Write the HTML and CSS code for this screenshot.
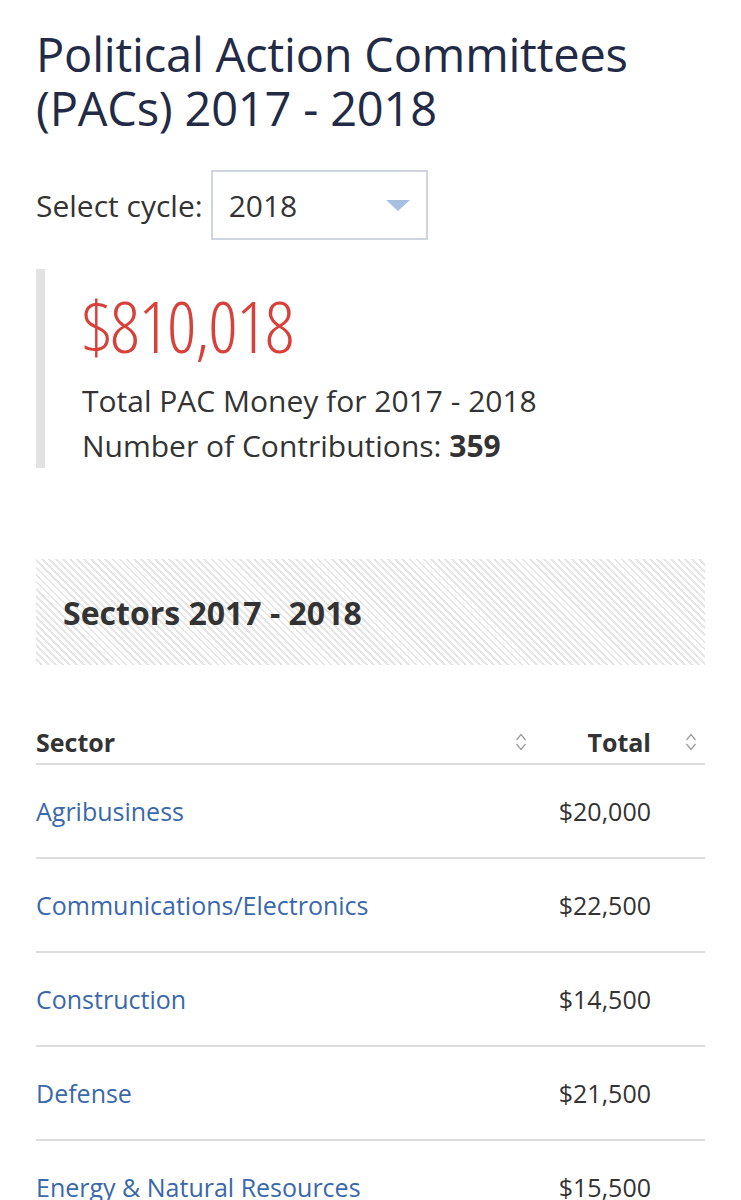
FILE: index.html
```html
<!DOCTYPE html>
<html lang="en">
<head>
<meta charset="utf-8">
<title>Political Action Committees (PACs) 2017 - 2018</title>
<link rel="stylesheet" href="styles.css">
</head>
<body>
<main class="page">
  <h1 class="title">Political Action Committees (PACs) 2017 - 2018</h1>

  <div class="cycle">
    <label class="cycle-label">Select cycle:</label>
    <div class="select">
      <span class="select-value">2018</span>
      <svg class="select-caret" width="24" height="11" viewBox="0 0 24 11"><polygon points="0,0 24,0 12,11" fill="#a9bfe2"/></svg>
    </div>
  </div>

  <section class="summary">
    <div class="summary-amount">$810,018</div>
    <p class="summary-line">Total PAC Money for 2017 - 2018</p>
    <p class="summary-line">Number of Contributions: <strong>359</strong></p>
  </section>

  <div class="section-head">
    <h2 class="section-title">Sectors 2017 - 2018</h2>
  </div>

  <table class="sectors">
    <thead>
      <tr>
        <th class="col-sector"><span class="th-inner"><span>Sector</span><svg class="sort" width="12" height="20" viewBox="0 0 12 20"><polyline points="1.5,8 6,2.5 10.5,8" fill="none" stroke="#9a9a9a" stroke-width="1.2"/><polyline points="1.5,12 6,17.5 10.5,12" fill="none" stroke="#9a9a9a" stroke-width="1.2"/></svg></span></th>
        <th class="col-total"><span class="th-inner th-right"><span>Total</span><svg class="sort" width="12" height="20" viewBox="0 0 12 20"><polyline points="1.5,8 6,2.5 10.5,8" fill="none" stroke="#9a9a9a" stroke-width="1.2"/><polyline points="1.5,12 6,17.5 10.5,12" fill="none" stroke="#9a9a9a" stroke-width="1.2"/></svg></span></th>
      </tr>
    </thead>
    <tbody>
      <tr><td><a href="#">Agribusiness</a></td><td class="amt">$20,000</td></tr>
      <tr><td><a href="#">Communications/Electronics</a></td><td class="amt">$22,500</td></tr>
      <tr><td><a href="#">Construction</a></td><td class="amt">$14,500</td></tr>
      <tr><td><a href="#">Defense</a></td><td class="amt">$21,500</td></tr>
      <tr><td><a href="#">Energy &amp; Natural Resources</a></td><td class="amt">$15,500</td></tr>
    </tbody>
  </table>
</main>
</body>
</html>
```

FILE: styles.css
```css
html, body {
  margin: 0;
  padding: 0;
  background: #ffffff;
}

body {
  font-family: "Open Sans", "Noto Sans", "DejaVu Sans", sans-serif;
  color: #333333;
}

.page {
  padding: 27px 36px 0 36px;
}

.title {
  margin: 0;
  font-size: 47px;
  font-weight: 400;
  line-height: 54px;
  color: #222a45;
  letter-spacing: -0.2px;
}

.cycle {
  display: flex;
  align-items: center;
  gap: 8px;
  margin-top: 35px;
}

.cycle-label {
  font-size: 30px;
  color: #333333;
}

.select {
  box-sizing: border-box;
  width: 217px;
  height: 70px;
  border: 2px solid #ced4e0;
  display: flex;
  align-items: center;
  justify-content: space-between;
  padding: 0 16px 0 16px;
}

.select-value {
  font-size: 30px;
  color: #333333;
}

.select-caret {
  display: block;
}

.summary {
  margin-top: 29px;
  border-left: 9px solid #e2e2e2;
  padding: 8px 0 0 37px;
}

.summary-amount {
  height: 96px;
  line-height: 96px;
  margin-bottom: 5px;
  font-size: 72px;
  font-weight: 300;
  color: #d8403a;
  font-stretch: 75%;
  letter-spacing: -1px;
}

.summary-line {
  margin: 0;
  font-size: 30px;
  line-height: 45px;
  color: #333333;
}

.summary-line strong {
  font-weight: 700;
}

.section-head {
  margin-top: 91px;
  height: 106px;
  display: flex;
  align-items: center;
  padding-left: 27px;
  background: repeating-linear-gradient(45deg, #ffffff 0px, #ffffff 3px, #e6e6e6 3px, #e6e6e6 5px);
}

.section-title {
  margin: 0;
  font-size: 32px;
  font-weight: 700;
  color: #333333;
}

.sectors {
  width: 100%;
  border-collapse: collapse;
  margin-top: 60px;
}

.sectors th {
  font-size: 25px;
  line-height: 34px;
  font-weight: 700;
  color: #333333;
  padding: 0 0 4px 0;
  border-bottom: 2px solid #dddddd;
  text-align: left;
}

.col-sector {
  width: 499px;
}

.th-inner {
  display: flex;
  align-items: center;
  justify-content: space-between;
  padding-right: 8px;
}

.th-right {
  justify-content: flex-end;
  gap: 34px;
}

.sort {
  display: block;
}

.sectors td {
  font-size: 25px;
  color: #333333;
  height: 92px;
  padding: 0;
  border-bottom: 2px solid #dddddd;
  vertical-align: middle;
}

.sectors td.amt {
  text-align: right;
  padding-right: 54px;
}

.sectors a {
  color: #3a68ab;
  text-decoration: none;
}
```
